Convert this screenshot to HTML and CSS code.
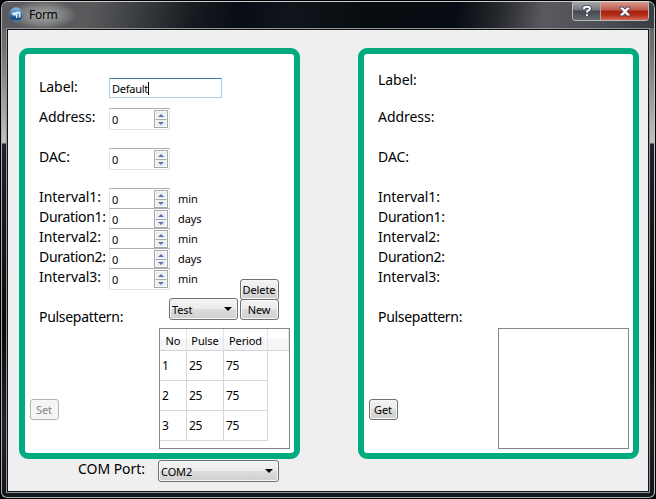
FILE: index.html
```
<!DOCTYPE html>
<html lang="en">
<head>
<meta charset="utf-8">
<title>Form</title>
<link rel="stylesheet" href="styles.css">
</head>
<body>
<div class="window">
  <header class="titlebar">
    <svg class="app-icon" width="14" height="15" viewBox="0 0 14 15">
      <defs><linearGradient id="orb" x1="0" y1="0" x2="0" y2="1"><stop offset="0" stop-color="#8fbbe0"/><stop offset=".5" stop-color="#3579b5"/><stop offset=".8" stop-color="#164579"/><stop offset="1" stop-color="#3b8fd0"/></linearGradient></defs>
      <ellipse cx="7" cy="7.5" rx="6.8" ry="7.2" fill="url(#orb)"/>
      <path d="M2.500 6L9 4.500l2.500.500v5.500H9.800V6.500H8.500V11H7V8.500H4z" fill="#dcebf7"/>
    </svg>
    <h1 class="title">Form</h1>
    <div class="window-buttons">
      <div class="wb wb-help"><svg width="10" height="12" viewBox="0 0 10 12"><path d="M2 4V3Q2.200 1.800 5 1.800T8 3.600Q8 5 6 5.700Q5 6.200 5 7.600M5 9.200v1.800" fill="none" stroke="#3c4254" stroke-width="3.600"/><path d="M2 4V3Q2.200 1.800 5 1.800T8 3.600Q8 5 6 5.700Q5 6.200 5 7.600M5 9.200v1.800" fill="none" stroke="#fff" stroke-width="2"/></svg></div>
      <div class="wb wb-close"><svg width="12" height="11" viewBox="0 0 12 11"><path d="M1 1h3l2 2.300L8 1h3v1.500L8 5.500l3 3V10H8L6 7.700 4 10H1V8.500l3-3-3-3z" fill="#fff" stroke="#4d4152"/></svg></div>
    </div>
  </header>
  <main class="client">
    <div class="panels">
      <section class="panel">
        <div class="form">
          <div class="row row-first"><label class="label">Label:</label><div class="edit">Default<span class="caret"></span></div></div>
          <div class="row row-tall"><label class="label">Address:</label><div class="spin"><span>0</span><div class="steps"><i class="up"></i><i class="down"></i></div></div></div>
          <div class="row row-tall"><label class="label">DAC:</label><div class="spin"><span>0</span><div class="steps"><i class="up"></i><i class="down"></i></div></div></div>
          <div class="row"><label class="label">Interval1:</label><div class="spin"><span>0</span><div class="steps"><i class="up"></i><i class="down"></i></div></div><span class="unit">min</span></div>
          <div class="row"><label class="label tight">Duration1:</label><div class="spin"><span>0</span><div class="steps"><i class="up"></i><i class="down"></i></div></div><span class="unit">days</span></div>
          <div class="row"><label class="label">Interval2:</label><div class="spin"><span>0</span><div class="steps"><i class="up"></i><i class="down"></i></div></div><span class="unit">min</span></div>
          <div class="row"><label class="label tight">Duration2:</label><div class="spin"><span>0</span><div class="steps"><i class="up"></i><i class="down"></i></div></div><span class="unit">days</span></div>
          <div class="row"><label class="label">Interval3:</label><div class="spin"><span>0</span><div class="steps"><i class="up"></i><i class="down"></i></div></div><span class="unit">min</span></div>
        </div>
        <div class="pattern-row">
          <span class="label tight">Pulsepattern:</span>
          <div class="combo combo-pattern"><span>Test</span><i class="arrow"></i></div>
          <div class="stack"><button class="button">Delete</button><button class="button">New</button></div>
        </div>
        <div class="bottom">
          <button class="button action" disabled>Set</button>
          <div class="list">
            <table class="table">
              <colgroup><col class="c1"><col class="c2"><col class="c3"><col></colgroup>
              <thead><tr><th>No</th><th>Pulse</th><th>Period</th><th></th></tr></thead>
              <tbody>
                <tr><td>1</td><td>25</td><td>75</td></tr>
                <tr><td>2</td><td>25</td><td>75</td></tr>
                <tr><td>3</td><td>25</td><td>75</td></tr>
              </tbody>
            </table>
          </div>
        </div>
      </section>
      <section class="panel">
        <div class="form readout">
          <div class="row row-read"><span class="label">Label:</span></div>
          <div class="row row-tall"><span class="label">Address:</span></div>
          <div class="row row-tall"><span class="label">DAC:</span></div>
          <div class="row"><span class="label">Interval1:</span></div>
          <div class="row"><span class="label tight">Duration1:</span></div>
          <div class="row"><span class="label">Interval2:</span></div>
          <div class="row"><span class="label tight">Duration2:</span></div>
          <div class="row"><span class="label">Interval3:</span></div>
        </div>
        <div class="pattern-row"><span class="label tight">Pulsepattern:</span></div>
        <div class="bottom">
          <button class="button action">Get</button>
          <div class="list"></div>
        </div>
      </section>
    </div>
    <footer class="port"><span class="label">COM Port:</span><div class="combo combo-port"><span>COM2</span><i class="arrow"></i></div></footer>
  </main>
</div>
</body>
</html>
```
FILE: styles.css
```
* { box-sizing: border-box; }
body {
  margin: 0;
  background: #000;
  color: #000;
  font: 11px/14px "Noto Sans", sans-serif;
  letter-spacing: -.1px;
  overflow: hidden;
}
.window {
  width: 654px;
  height: 497px;
  margin: 1px;
  padding: 0 5px 4px 4px;
  border: 1px solid #c5c5c9;
  border-color: #c9c9ce #bdbfc2 #aaaeb2 #aaaeb2;
  border-radius: 7px 7px 6px 6px;
  background:
    linear-gradient(#57575b 0, #707072 45px, #c0c0c0 139px, #b5b8b8 141px, #1d2329 142px, #11171b 240px, #070b0e 330px, #20252a 420px, #10161b 100%);
}
.titlebar {
  display: flex;
  align-items: flex-start;
  height: 26px;
  margin: 0 -5px 0 -4px;
  padding: 5px 5px 0 7px;
  border-radius: 6px 6px 0 0;
  background:
    radial-gradient(ellipse 34px 15px at 41px 13px, #a9abaa 0, #8c8f8ecc 55%, transparent 100%),
    linear-gradient(100deg, #5b5a60 0, #58595b 90px, #3b3e41 135px, #171b20 190px, #080c14 235px, #10151c 285px, #080d10 360px, #080c14 450px, #24272b 490px, #5a5960 535px, #4d5054 590px, #393e43 100%);
}
.app-icon { margin-top: 0; margin-left: 0; }
.title {
  margin: 0 0 0 6px;
  font: 12px/16px "Noto Sans", sans-serif;
  letter-spacing: -.3px;
}
.window-buttons {
  display: flex;
  width: 77px;
  height: 20px;
  margin: -6px 0 0 auto;
  border: 1px solid #b9babc;
  border-top-color: #ddd;
  border-radius: 0 0 4px 4px;
  overflow: hidden;
}
.wb { display: flex; align-items: center; justify-content: center; }
.wb svg { display: block; }
.wb-help { width: 28px; border-right: 1px solid #b9a5a2; background: linear-gradient(#a3a5a9 0, #74777d 44%, #45494f 50%, #656a70 100%); }
.wb-close { flex: 1; background: linear-gradient(#d59a8d 0, #bd5a48 45%, #a41e0a 50%, #b9301c 75%, #d46a51 100%); }
.client {
  height: 463px;
  border: 1px solid #111;
  outline: 1px solid #92969a;
  margin: 1px 0 0 1px;
  width: 642px;
  background: #efefef;
  padding: 18px 9px 0 11px;
}
.panels { display: flex; justify-content: space-between; }
.panel {
  width: 281px;
  height: 411px;
  border: 6px solid #00ab80;
  border-radius: 9px;
  background: #fff;
}
.form { height: 225px; padding: 24px 0 0 14px; }
.readout { padding-top: 17px; padding-left: 14px; }
.row { display: flex; height: 20px; }
.row-first { height: 30px; }
.row-read { height: 37px; }
.row-tall { height: 40px; }
.label {
  width: 70px;
  flex: none;
  font-size: 14px;
  line-height: 18px;
  letter-spacing: -.05px;
  white-space: nowrap;
}
.tight { letter-spacing: -.3px; }
.edit {
  display: flex;
  align-items: center;
  width: 113px;
  height: 20px;
  padding: 1px 2px 0;
  border: 1px solid #a9cfe7;
  border-top-color: #3d7bad;
  border-radius: 1px;
  letter-spacing: -.25px;
}
.caret { width: 1px; height: 13px; background: #000; }
.spin {
  display: flex;
  justify-content: space-between;
  width: 61px;
  height: 22px;
  padding: 1px 1px 1px 2px;
  border: 1px solid #e2e3ea;
  border-top-color: #abadb3;
  background: #fff;
  flex: none;
}
.spin span { line-height: 20px; }
.steps { width: 14px; height: 18px; border: 1px solid #a7a8ac; display: flex; flex-direction: column; }
.steps i {
  display: flex;
  flex: 1;
  align-items: center;
  justify-content: center;
  background: #efefef;
  border: 1px solid #f8f8f8;
}
.steps i::before { content: ""; border: 3px solid transparent; border-top-width: 0; border-bottom: 3px solid #5871b9; }
.steps .down { border-top-color: #a7a8ac; }
.steps .down::before { border-bottom-width: 0; border-top: 3px solid #5871b9; }
.unit { margin-left: 8px; line-height: 22px; }
.pattern-row { display: flex; height: 49px; padding-left: 14px; }
.pattern-row .label { width: 130px; margin-top: 29px; }
.button {
  width: 39px;
  height: 21px;
  padding: 1px 1px 0 0;
  border: 1px solid #707070;
  border-radius: 3px;
  background: linear-gradient(#f3f3f3 0, #ebebeb 49%, #dddddd 50%, #cfcfcf 100%);
  box-shadow: inset 0 0 0 1px #f8f8f8;
  color: #000;
  font: inherit;
  letter-spacing: -.1px;
}
.stack { display: grid; height: 41px; grid-template-rows: 20px 21px; margin-left: 2px; }
.combo {
  display: flex;
  align-items: center;
  justify-content: space-between;
  height: 22px;
  padding: 2px 5px 0 2px;
  border: 1px solid #707070;
  border-radius: 3px;
  background: linear-gradient(#f3f3f3 0, #ebebeb 49%, #dddddd 50%, #cfcfcf 100%);
  box-shadow: inset 0 0 0 1px #f8f8f8;
}
.combo-pattern { width: 69px; margin-top: 19px; }
.arrow { border: 4px solid transparent; border-top-color: #000; border-bottom: 0; margin-top: -2px; }
.bottom { display: flex; align-items: flex-start; justify-content: space-between; padding: 0 4px 0 5px; }
.action { width: 29px; margin-top: 71px; }
.action:disabled { color: #838383; background: #f4f4f4; border-color: #adb2b5; }
.list { width: 131px; height: 121px; border: 1px solid #828790; background: #fff; }
.table { width: 129px; table-layout: fixed; border-collapse: separate; border-spacing: 0; }
.c1 { width: 27px; }
.c2 { width: 37px; }
.c3 { width: 44px; }
.table th {
  height: 22px;
  padding: 2px 0 0;
  font-weight: 400;
  border-right: 1px solid #e3e5e8;
  border-bottom: 1px solid #d5d5d5;
  background: linear-gradient(#fff 45%, #f5f6f8 50%);
}
.table td {
  height: 30px;
  padding: 1px 2px 0;
  font-size: 12px;
  letter-spacing: -.3px;
  border-right: 1px solid #d8d8d8;
  border-bottom: 1px solid #d8d8d8;
}
.port { display: flex; padding: 1px 0 0 59px; }
.port .label { width: 80px; }
.combo-port { width: 121px; }
```
